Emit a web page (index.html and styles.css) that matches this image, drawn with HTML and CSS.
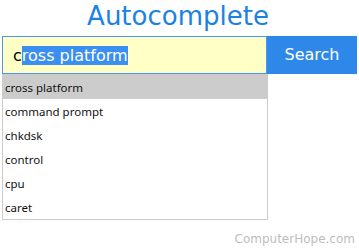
FILE: index.html
```html
<!DOCTYPE html>
<html>
<head>
<meta charset="utf-8">
<link rel="stylesheet" href="styles.css">
</head>
<body>
<div class="page">
  <h1 class="title">Autocomplete</h1>
  <div class="search-row">
    <div class="field"><span class="typed">c</span><span class="sel">ross platform</span></div>
    <div class="btn">Search</div>
  </div>
  <ul class="list">
    <li class="item active">cross platform</li>
    <li class="item">command prompt</li>
    <li class="item">chkdsk</li>
    <li class="item">control</li>
    <li class="item">cpu</li>
    <li class="item">caret</li>
  </ul>
  <div class="footer">ComputerHope.com</div>
</div>
</body>
</html>
```

FILE: styles.css
```css
html, body {
  margin: 0;
  padding: 0;
  background: #ffffff;
}
.page {
  width: 359px;
  height: 250px;
  overflow: hidden;
  padding-left: 2px;
  padding-top: 1px;
  box-sizing: border-box;
}
.title {
  margin: 0;
  font-family: "DejaVu Sans", sans-serif;
  font-weight: normal;
  font-size: 26px;
  line-height: 31px;
  color: #1a82e2;
  text-align: center;
  padding-right: 5px;
}
.search-row {
  display: flex;
  margin-top: 4px;
  height: 38px;
}
.field {
  width: 265px;
  height: 38px;
  box-sizing: border-box;
  border: 1px solid #4f97ec;
  background: #ffffc6;
  font-family: "DejaVu Sans", sans-serif;
  font-size: 16px;
  line-height: 19px;
  padding: 9px 0 0 10px;
  color: #000;
  white-space: nowrap;
}
.sel {
  background: #3b8ff0;
  color: #ffffff;
}
.btn {
  width: 90px;
  height: 38px;
  background: #2e88ea;
  color: #ffffff;
  font-family: "DejaVu Sans", sans-serif;
  font-size: 16px;
  line-height: 38px;
  text-align: center;
}
.list {
  list-style: none;
  margin: 0;
  padding: 0;
  width: 266px;
  box-sizing: border-box;
  border: 1px solid #cccccc;
}
.item {
  height: 24px;
  box-sizing: border-box;
  padding-top: 1px;
  line-height: 23px;
  padding-left: 2px;
  font-family: "Noto Sans", sans-serif;
  font-size: 11.5px;
  color: #111111;
}
.item.active {
  background: #cccccc;
}
.footer {
  margin-top: 11px;
  text-align: right;
  padding-right: 4px;
  font-family: "DejaVu Sans", sans-serif;
  font-size: 12px;
  line-height: 16px;
  color: #bdbdbd;
}
```
